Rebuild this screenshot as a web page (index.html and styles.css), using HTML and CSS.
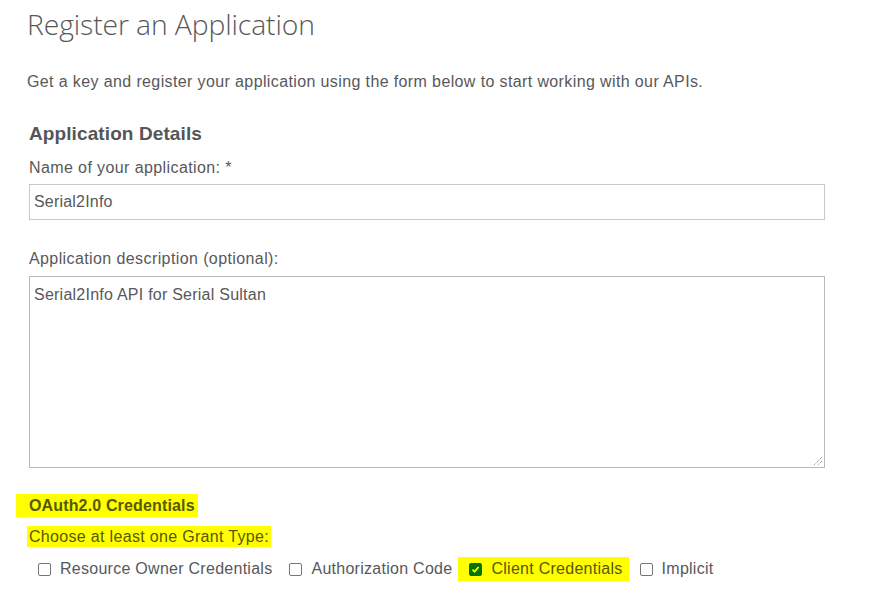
FILE: index.html
```html
<!DOCTYPE html>
<html>
<head>
<meta charset="utf-8">
<link rel="stylesheet" href="styles.css">
</head>
<body>
<div class="page">
  <h1 class="title">Register an Application</h1>
  <p class="intro">Get a key and register your application using the form below to start working with our APIs.</p>
  <div class="form">
    <h2 class="section">Application Details</h2>
    <label class="label">Name of your application: *</label>
    <div class="input">Serial2Info</div>
    <label class="label label-desc">Application description (optional):</label>
    <div class="textarea">Serial2Info API for Serial Sultan
      <svg class="grip" width="10" height="10" viewBox="0 0 10 10"><path d="M9 1L1 9M9 5L5 9" stroke="#777" stroke-width="1" stroke-dasharray="1 1" fill="none"/></svg>
    </div>
    <div class="oauth"><span class="hl hl-head">OAuth2.0 Credentials</span></div>
    <div class="choose"><span class="hl hl-choose">Choose at least one Grant Type:</span></div>
    <div class="grants">
      <label class="grant"><span class="box"></span>Resource Owner Credentials</label>
      <label class="grant"><span class="box"></span>Authorization Code</label>
      <label class="grant grant-hl"><span class="box box-on"><svg width="9" height="9" viewBox="0 0 9 9"><path d="M1.5 4.6L3.6 6.7L7.6 2" stroke="#ffff00" stroke-width="1.8" fill="none"/></svg></span>Client Credentials</label>
      <label class="grant"><span class="box"></span>Implicit</label>
    </div>
  </div>
</div>
</body>
</html>
```
FILE: styles.css
```css
html, body {
  margin: 0;
  padding: 0;
  background: #fff;
  overflow: hidden;
}
body {
  width: 876px;
  height: 596px;
  font-family: "Liberation Sans", Arial, sans-serif;
  color: #58585b;
}
.page {
  padding: 0 0 0 27px;
}
.title {
  margin: 0;
  padding-top: 6px;
  font-family: "Open Sans", "Liberation Sans", sans-serif;
  font-weight: 300;
  font-size: 28.3px;
  line-height: 36px;
  color: #58585b;
  letter-spacing: -0.1px;
}
.intro {
  margin: 0;
  padding-top: 28px;
  font-size: 16px;
  line-height: 24px;
  letter-spacing: 0.38px;
}
.form {
  padding-left: 2px;
  width: 796px;
}
.section {
  margin: 0;
  padding-top: 28px;
  font-size: 19px;
  line-height: 24px;
  font-weight: bold;
  color: #555558;
  letter-spacing: 0.1px;
}
.label {
  display: block;
  padding-top: 12px;
  font-size: 16px;
  line-height: 20px;
  letter-spacing: 0.4px;
}
.label-desc {
  padding-top: 29px;
}
.input {
  margin-top: 6px;
  box-sizing: border-box;
  height: 36px;
  border: 1px solid #c8c8c8;
  padding: 0 4px;
  font-size: 16px;
  line-height: 34px;
  letter-spacing: 0.2px;
}
.textarea {
  position: relative;
  margin-top: 7px;
  box-sizing: border-box;
  height: 192px;
  border: 1px solid #b8b8b8;
  padding: 8px 4px;
  font-size: 16px;
  line-height: 20px;
  letter-spacing: 0.24px;
}
.grip {
  position: absolute;
  right: 1px;
  bottom: 1px;
}
.oauth {
  margin-left: -13px;
  padding-top: 26px;
  line-height: 23px;
}
.hl {
  background: #ffff00;
  color: #585800;
  font-size: 16px;
}
.hl-head {
  display: inline-block;
  font-weight: bold;
  padding: 0 3px 0 13px;
  line-height: 23px;
  letter-spacing: 0.15px;
}
.choose {
  margin-left: -2px;
  padding-top: 9px;
}
.hl-choose {
  display: inline-block;
  padding: 0 2px;
  line-height: 21px;
  letter-spacing: 0.32px;
}
.grants {
  display: flex;
  gap: 17px;
  padding-top: 10px;
  padding-left: 9px;
  font-size: 16px;
  line-height: 24px;
  letter-spacing: 0.27px;
}
.grant {
  display: flex;
  align-items: center;
  gap: 9px;
}
.grant-hl {
  background: #ffff00;
  color: #585800;
  margin-left: -11px;
  padding: 0 6px 0 11px;
  margin-right: -6px;
}
.box {
  display: inline-block;
  box-sizing: border-box;
  width: 13px;
  height: 13px;
  border: 1px solid #767676;
  border-radius: 2px;
  background: #fff;
}
.box-on {
  background: #007500;
  border-color: #007500;
  display: flex;
  align-items: center;
  justify-content: center;
}
```
